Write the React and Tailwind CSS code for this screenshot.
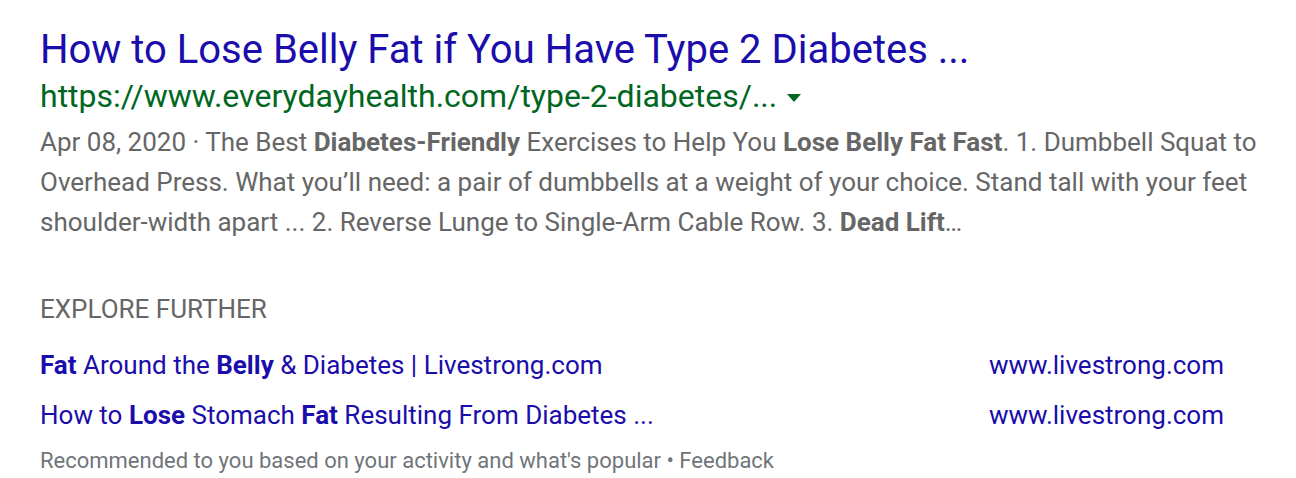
export default function App() {
  const font = { fontFamily: 'Roboto, "Noto Sans", sans-serif' };
  return (
    <div className="w-[1296px] h-[478px] bg-white overflow-hidden" style={font}>
      <div className="pl-10 pt-[26px] w-[1240px]">
        <div className="text-[40px] leading-[48px] text-[#1a0dab] whitespace-nowrap">
          How to Lose Belly Fat if You Have Type 2 Diabetes ...
        </div>
        <div className="flex items-center text-[32px] leading-[40px] text-[#006621] whitespace-nowrap mt-[2px]">
          <span>https://www.everydayhealth.com/type-2-diabetes/...</span>
          <span className="ml-[10px] w-0 h-0 border-l-[7px] border-r-[7px] border-t-[8px] border-l-transparent border-r-transparent border-t-[#006621] mt-[4px]"></span>
        </div>
        <div className="text-[26px] leading-[40px] text-[#666666] mt-[6px] whitespace-nowrap">
          <div>Apr 08, 2020 · The Best <b className="font-bold">Diabetes-Friendly</b> Exercises to Help You <b className="font-bold">Lose Belly Fat Fast</b>. 1. Dumbbell Squat to</div>
          <div>Overhead Press. What you’ll need: a pair of dumbbells at a weight of your choice. Stand tall with your feet</div>
          <div>shoulder-width apart ... 2. Reverse Lunge to Single-Arm Cable Row. 3. <b className="font-bold">Dead Lift</b>…</div>
        </div>
        <div className="text-[26px] leading-[32px] text-[#666666] mt-[51px]">EXPLORE FURTHER</div>
        <div className="flex justify-between text-[26px] leading-[32px] text-[#1a0dab] mt-[24px] pr-[16px]">
          <span><b className="font-bold">Fat</b> Around the <b className="font-bold">Belly</b> &amp; Diabetes | Livestrong.com</span>
          <span>www.livestrong.com</span>
        </div>
        <div className="flex justify-between text-[26px] leading-[32px] text-[#1a0dab] mt-[18px] pr-[16px]">
          <span>How to <b className="font-bold">Lose</b> Stomach <b className="font-bold">Fat</b> Resulting From Diabetes ...</span>
          <span>www.livestrong.com</span>
        </div>
        <div className="text-[22px] leading-[28px] text-[#70757a] mt-[16px]">
          Recommended to you based on your activity and what's popular • Feedback
        </div>
      </div>
    </div>
  );
}
